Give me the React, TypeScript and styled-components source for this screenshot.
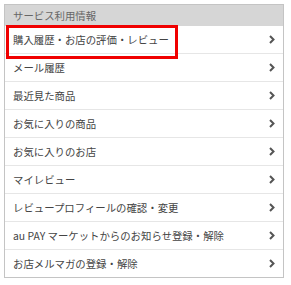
import React from "react";
import styled, { createGlobalStyle } from "styled-components";

const Global = createGlobalStyle`
  html, body { margin: 0; padding: 0; background: #fff; }
  body { font-family: "Noto Sans CJK JP", "Noto Sans", sans-serif; }
`;

const Page = styled.div`
  padding: 4px 7px 8px 4px;
`;

const Panel = styled.div`
  position: relative;
  border: 1px solid #c4c4c4;
  background: #fff;
`;

const Header = styled.div`
  height: 21px;
  background: #d6d6d6;
  display: flex;
  align-items: center;
  padding-left: 8px;
  font-size: 10.4px;
  color: #666;
`;

const List = styled.div`
  display: flex;
  flex-direction: column;
`;

const Row = styled.div`
  height: 27px;
  display: flex;
  align-items: center;
  justify-content: space-between;
  padding: 0 8px 0 8px;
  font-size: 10.4px;
  color: #444;
  border-top: 1px solid #e6e6e6;
  &:first-of-type { border-top: none; }
`;

const Highlight = styled.div`
  position: absolute;
  left: 1px;
  top: 20px;
  width: 166px;
  height: 28px;
  border: 3px solid #f00000;
`;

const Chevron = () => (
  <svg width="6" height="9" viewBox="0 0 6 9">
    <path d="M1 1 L4.5 4.5 L1 8" fill="none" stroke="#555" strokeWidth="2" />
  </svg>
);

const items = [
  "購入履歴・お店の評価・レビュー",
  "メール履歴",
  "最近見た商品",
  "お気に入りの商品",
  "お気に入りのお店",
  "マイレビュー",
  "レビュープロフィールの確認・変更",
  "au PAY マーケットからのお知らせ登録・解除",
  "お店メルマガの登録・解除",
];

export default function App() {
  return (
    <Page>
      <Global />
      <Panel>
        <Header>サービス利用情報</Header>
        <List>
          {items.map((t) => (
            <Row key={t}>
              <span>{t}</span>
              <Chevron />
            </Row>
          ))}
        </List>
        <Highlight />
      </Panel>
    </Page>
  );
}
